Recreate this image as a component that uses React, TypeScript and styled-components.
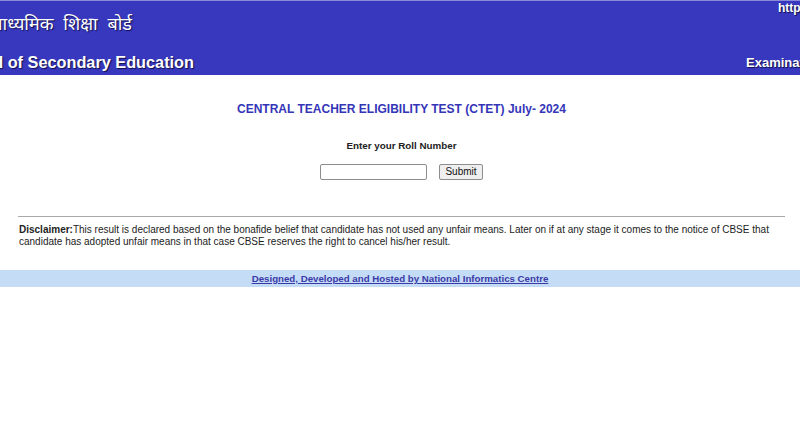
import React from "react";
import styled, { createGlobalStyle } from "styled-components";

const Global = createGlobalStyle`
  html, body { margin: 0; padding: 0; background: #fff; }
  body { font-family: "Liberation Sans", Arial, sans-serif; }
`;

const Header = styled.header`
  height: 75px;
  background: #3838bf;
  border-top: 1px solid #8a8ad8;
  box-sizing: border-box;
  overflow: hidden;
  display: flex;
  justify-content: space-between;
  color: #fff;
  text-shadow: 1px 1px 1px #10104a;
  font-weight: bold;
  white-space: nowrap;
`;

const Left = styled.div`
  flex: 0 0 194px;
  min-width: 0;
  display: flex;
  flex-direction: column;
  align-items: flex-end;
  padding-top: 10px;
`;

const Hindi = styled.div`
  font-family: "Noto Sans Devanagari", "Noto Sans", "Liberation Sans", sans-serif;
  font-size: 18px;
  font-weight: normal;
  line-height: 30px;
  word-spacing: 5px;
  margin-right: 62px;
  flex-shrink: 0;
`;

const English = styled.div`
  font-size: 16.3px;
  line-height: 20px;
  margin-top: 11px;
  flex-shrink: 0;
`;

const Right = styled.div`
  flex: 0 0 54px;
  min-width: 0;
  display: flex;
  flex-direction: column;
  align-items: flex-start;
`;

const Url = styled.div`
  font-size: 12px;
  line-height: 14px;
  padding-left: 32px;
  flex-shrink: 0;
`;

const Exam = styled.div`
  font-size: 13px;
  line-height: 16px;
  margin-top: 40px;
  flex-shrink: 0;
`;

const Main = styled.main`
  padding: 0 15px 0 18px;
  display: flex;
  flex-direction: column;
  align-items: center;
`;

const Title = styled.h1`
  margin: 26px 0 0;
  font-size: 12px;
  line-height: 16px;
  color: #3535b8;
  font-weight: bold;
`;

const Prompt = styled.div`
  margin-top: 22px;
  font-size: 9.8px;
  font-weight: bold;
  color: #222;
  line-height: 14px;
`;

const Form = styled.form`
  margin-top: 11px;
  display: flex;
  gap: 12px;
  align-items: center;
`;

const Input = styled.input`
  width: 107px;
  height: 16px;
  box-sizing: border-box;
  border: 1px solid #8d8d8d;
  border-radius: 2px;
  padding: 0 2px;
`;

const Button = styled.button`
  height: 16px;
  padding: 0 5px;
  font-family: "Liberation Sans", Arial, sans-serif;
  font-size: 10px;
  line-height: 14px;
  color: #111;
  background: #efefef;
  border: 1px solid #8d8d8d;
  border-radius: 2px;
`;

const Rule = styled.hr`
  align-self: stretch;
  margin: 36px 0 0;
  border: 0;
  border-top: 1px solid #a8a8a8;
`;

const Disclaimer = styled.p`
  align-self: stretch;
  margin: 7px 0 0 1px;
  font-size: 10px;
  line-height: 12px;
  color: #222;
`;

const Footer = styled.footer`
  margin-top: 22px;
  background: #c5dcf6;
  height: 17px;
  display: flex;
  justify-content: center;
  align-items: center;
`;

const Link = styled.a`
  font-size: 9.7px;
  font-weight: bold;
  color: #3a3aa8;
  text-decoration: underline;
`;

export default function App() {
  return (
    <>
      <Global />
      <Header>
        <Left>
          <Hindi>केन्द्रीय माध्यमिक शिक्षा बोर्ड</Hindi>
          <English>Central Board of Secondary Education</English>
        </Left>
        <Right>
          <Url>http://cbse.gov.in</Url>
          <Exam>Examination Results</Exam>
        </Right>
      </Header>
      <Main>
        <Title>CENTRAL TEACHER ELIGIBILITY TEST (CTET) July- 2024</Title>
        <Prompt>Enter your Roll Number</Prompt>
        <Form onSubmit={(e) => e.preventDefault()}>
          <Input type="text" />
          <Button type="submit">Submit</Button>
        </Form>
        <Rule />
        <Disclaimer>
          <b>Disclaimer:</b>This result is declared based on the bonafide belief that candidate has not used any unfair means. Later on if at any stage it comes to the notice of CBSE that candidate has adopted unfair means in that case CBSE reserves the right to cancel his/her result.
        </Disclaimer>
      </Main>
      <Footer>
        <Link href="#">Designed, Developed and Hosted by National Informatics Centre</Link>
      </Footer>
    </>
  );
}
